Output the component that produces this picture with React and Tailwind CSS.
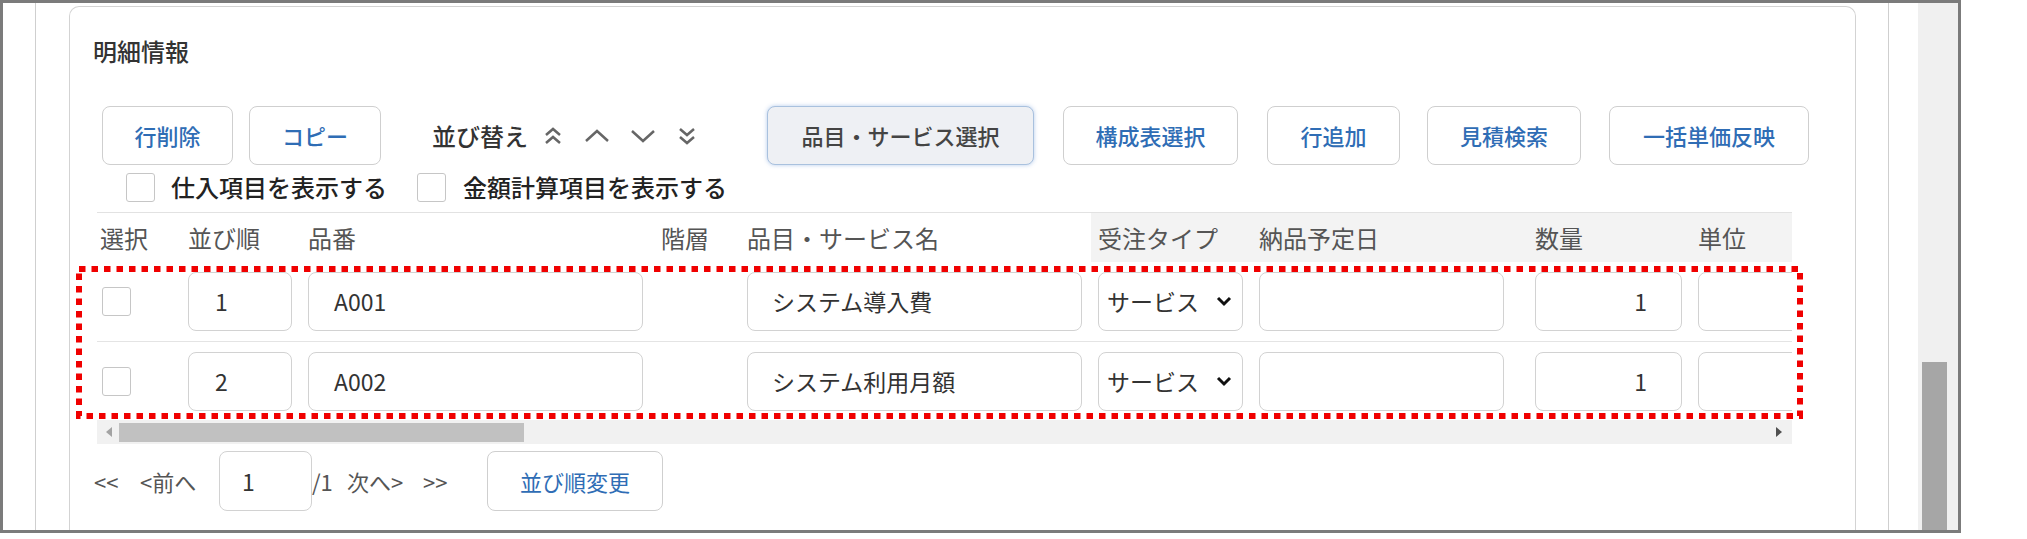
import React from 'react';

// 明細情報 panel (見積明細)
const Btn = ({ className, children }) => (
  <button
    className={`h-[59px] shrink-0 rounded-[8px] border border-[#cfcfcf] bg-white text-[22px] font-medium text-[#2f6db5] flex items-center justify-center ${className}`}
  >
    {children}
  </button>
);

const Check = ({ className = '' }) => (
  <span className={`block w-[29px] h-[29px] shrink-0 rounded-[3px] border-[1.5px] border-[#c6c6c6] bg-white ${className}`} />
);

const Field = ({ className = '', children }) => (
  <div
    className={`h-[59px] rounded-[8px] border-[1.5px] border-[#d2d2d2] bg-white flex items-center text-[23px] text-[#333] ${className}`}
  >
    {children}
  </div>
);

const SortIcon = ({ type }) => {
  const paths = {
    top: ['M3 9L10 3L17 9', 'M3 17L10 11L17 17'],
    up: ['M2 12L13 2L24 12'],
    down: ['M2 2L13 12L24 2'],
    bottom: ['M3 3L10 9L17 3', 'M3 11L10 17L17 11'],
  };
  const wide = type === 'up' || type === 'down';
  return (
    <svg
      width={wide ? 26 : 20}
      height={wide ? 14 : 20}
      viewBox={wide ? '0 0 26 14' : '0 0 20 20'}
      fill="none"
      stroke="#666"
      strokeWidth="2.5"
      className="shrink-0"
    >
      {paths[type].map((d) => (
        <path key={d} d={d} />
      ))}
    </svg>
  );
};

const rows = [
  { no: '1', code: 'A001', name: 'システム導入費', qty: '1' },
  { no: '2', code: 'A002', name: 'システム利用月額', qty: '1' },
];

const cols = 'grid grid-cols-[72px_104px_335px_72px_335px_145px_260px_147px_147px] gap-x-4 pl-[3px]';

export default function App() {
  return (
    <div className="relative w-[2027px] h-[539px] bg-white overflow-hidden font-['Noto_Sans_CJK_JP','Noto_Sans',sans-serif]">
      <div className="w-[1961px] h-[533px] border-[3px] border-[#7b7b7b] overflow-hidden flex">
        <div className="w-[32px] shrink-0" />
        <div className="w-px shrink-0 bg-[#cfcfcf]" />
        <div className="w-[33px] shrink-0" />

        {/* card */}
        <div className="w-[1787px] shrink-0 mt-[3px] h-[600px] rounded-t-[10px] border border-b-0 border-[#d3d3d3]">
          <div className="ml-[23px] pt-[28px] text-[24px] leading-[32px] font-medium text-[#333]">明細情報</div>

          {/* toolbar */}
          <div className="mt-[39px] ml-[32px] flex items-center h-[59px]">
            <Btn className="w-[131px]">行削除</Btn>
            <Btn className="w-[132px] ml-[16px]">コピー</Btn>
            <span className="w-[96px] ml-[51px] shrink-0 text-[24px] font-medium text-[#333] whitespace-nowrap">並び替え</span>
            <span className="ml-[15px]"><SortIcon type="top" /></span>
            <span className="ml-[21px]"><SortIcon type="up" /></span>
            <span className="ml-[20px]"><SortIcon type="down" /></span>
            <span className="ml-[21px]"><SortIcon type="bottom" /></span>
            <button className="ml-[70px] w-[267px] h-[59px] shrink-0 rounded-[8px] border-[1.5px] border-[#a9c1de] bg-[#eef0f4] shadow-[0_0_4px_rgba(90,140,210,0.45)] text-[22px] font-medium text-[#444]">
              品目・サービス選択
            </button>
            <Btn className="w-[175px] ml-[29px]">構成表選択</Btn>
            <Btn className="w-[133px] ml-[29px]">行追加</Btn>
            <Btn className="w-[154px] ml-[27px]">見積検索</Btn>
            <Btn className="w-[200px] ml-[28px]">一括単価反映</Btn>
          </div>

          {/* options */}
          <div className="mt-[7px] ml-[56px] h-[30px] flex items-center text-[24px] leading-[30px] font-medium text-[#222]">
            <Check />
            <span className="ml-[16px] w-[220px] whitespace-nowrap">仕入項目を表示する</span>
            <Check className="ml-[26px]" />
            <span className="ml-[17px] whitespace-nowrap">金額計算項目を表示する</span>
          </div>

          {/* table */}
          <div className="mt-[10px] ml-[27px] w-[1695px] overflow-hidden">
            <div className={`${cols} h-[50px] items-center border-t border-[#e2e2e2] bg-[linear-gradient(to_right,#fff_994px,#f3f3f3_994px)] text-[24px] text-[#555] whitespace-nowrap`}>
              <div>選択</div>
              <div>並び順</div>
              <div>品番</div>
              <div className="pl-[2px]">階層</div>
              <div>品目・サービス名</div>
              <div>受注タイプ</div>
              <div>納品予定日</div>
              <div>数量</div>
              <div>単位</div>
            </div>

            {rows.map((r, i) => (
              <div
                key={r.no}
                className={`${cols} items-center ${i === 0 ? 'h-[80px] border-b border-[#e4e4e4]' : 'h-[78px]'}`}
              >
                <div><Check className="ml-[2px]" /></div>
                <Field className="pl-[26px]">{r.no}</Field>
                <Field className="pl-[25px]">{r.code}</Field>
                <div />
                <Field className="pl-[24px] whitespace-nowrap">{r.name}</Field>
                <Field className="pl-[8px] pr-[10px] justify-between whitespace-nowrap">
                  <span>サービス</span>
                  <svg width="16" height="11" viewBox="0 0 16 11" fill="none" stroke="#111" strokeWidth="3">
                    <path d="M2 2L8 8L14 2" />
                  </svg>
                </Field>
                <div><Field className="w-[245px]" /></div>
                <Field className="justify-end pr-[34px]">{r.qty}</Field>
                <Field />
              </div>
            ))}

            {/* horizontal scrollbar */}
            <div className="relative h-[24px] bg-[#f1f1f1] flex items-center">
              <svg width="6" height="10" viewBox="0 0 6 10" className="ml-[9px] shrink-0">
                <path d="M6 0L0 5L6 10Z" fill="#a3a3a3" />
              </svg>
              <div className="ml-[7px] w-[405px] h-[19px] bg-[#c1c1c1]" />
              <div className="flex-1" />
              <svg width="6" height="10" viewBox="0 0 6 10" className="mr-[10px] shrink-0">
                <path d="M0 0L6 5L0 10Z" fill="#505050" />
              </svg>
            </div>
          </div>

          {/* pager */}
          <div className="mt-[7px] ml-[24px] h-[60px] flex items-center text-[22px] text-[#555] whitespace-nowrap">
            <span className="w-[46px] shrink-0">&lt;&lt;</span>
            <span className="w-[79px] shrink-0">&lt;前へ</span>
            <div className="w-[93px] h-[60px] shrink-0 rounded-[8px] border-[1.5px] border-[#d2d2d2] flex items-center pl-[22px] text-[23px] text-[#333]">1</div>
            <span className="w-[35px] shrink-0">/1</span>
            <span className="w-[76px] shrink-0">次へ&gt;</span>
            <span className="w-[64px] shrink-0">&gt;&gt;</span>
            <button className="w-[176px] h-[60px] shrink-0 rounded-[8px] border border-[#cfcfcf] bg-white text-[22px] text-[#2f6db5]">並び順変更</button>
          </div>
        </div>

        <div className="w-[32px] shrink-0" />
        <div className="w-px shrink-0 bg-[#cfcfcf]" />
        <div className="w-[29px] shrink-0" />
        {/* vertical scrollbar */}
        <div className="w-[40px] shrink-0 bg-[#f0f0f0]">
          <div className="mt-[359px] ml-[4px] w-[25px] h-[200px] bg-[#a6a6a6]" />
        </div>
      </div>

      {/* annotation highlight */}
      <svg className="absolute left-[76px] top-[266px] pointer-events-none" width="1727" height="153">
        <rect x="3" y="3" width="1721" height="147" fill="none" stroke="#f00000" strokeWidth="6" strokeDasharray="6.5 6" />
      </svg>
    </div>
  );
}
